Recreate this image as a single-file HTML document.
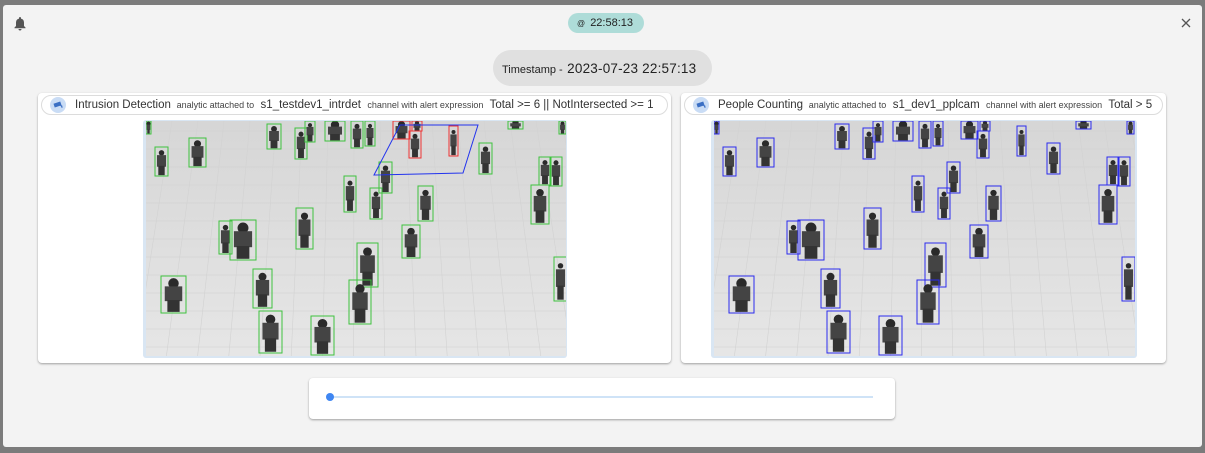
<!DOCTYPE html>
<html><head><meta charset="utf-8"><style>
html,body{margin:0;padding:0;width:1205px;height:453px;overflow:hidden;background:#7b7b7b;font-family:"Liberation Sans",sans-serif;}
.modal{position:absolute;left:3px;top:5px;width:1199px;height:442px;background:#f3f3f3;border-radius:3px;}
.abs{position:absolute;}
.card{position:absolute;background:#fff;border-radius:4px;box-shadow:0 1px 2px rgba(0,0,0,.35);}
.hdr{position:absolute;top:2px;left:3px;right:3px;height:18px;border:1px solid #dcdcdc;border-radius:10px;background:#fff;font-size:11.5px;color:#333;white-space:nowrap;line-height:18px;}
.hdr .ic{position:absolute;left:8px;top:1px;width:16px;height:16px;border-radius:50%;background:#c9dcf5;}
.hdr .ic svg{position:absolute;left:3px;top:4px}
.hdr .t{position:absolute;left:33px;top:0;}
.s{font-size:9px;color:#444;}
.m{font-size:11.5px;}
.img{position:absolute;top:27px;background:#d9e6f3;border-radius:3px;}
</style></head><body>
<div class="modal">
  <svg class="abs" style="left:10px;top:11px" width="14" height="15" viewBox="0 0 14 15"><path d="M7 1a1 1 0 0 1 1 1v.6A4 4 0 0 1 11 6.5V10l1.5 1.5v.7h-11v-.7L3 10V6.5A4 4 0 0 1 6 2.6V2a1 1 0 0 1 1-1z M5.5 13h3a1.5 1.5 0 0 1-3 0z" fill="#555"/></svg>
  <div class="abs" style="left:565px;top:8px;width:76px;height:20px;border-radius:10px;background:#aedcd8;font-size:11px;line-height:20px;color:#222"><span style="font-size:8px;margin-left:9px">@</span> <span style="margin-left:2px">22:58:13</span></div>
  <svg class="abs" style="left:1178px;top:13px" width="10" height="10"><path d="M1 1L9 9M9 1L1 9" stroke="#555" stroke-width="1.3"/></svg>
  <div class="abs" style="left:490px;top:45px;width:219px;height:36px;border-radius:18px;background:#e0e0e0;line-height:37px;color:#222;white-space:nowrap"><span style="font-size:11px;margin-left:9px">Timestamp -</span> <span style="font-size:13.5px;letter-spacing:.2px">2023-07-23 22:57:13</span></div>

  <div class="card" style="left:35px;top:88px;width:633px;height:270px">
    <div class="hdr"><div class="ic"><svg width="10" height="8"><path d="M1 3l6-2 1 3-6 2z M7 4l2 1v2" fill="#3a6fc4" stroke="#3a6fc4" stroke-width=".8"/></svg></div><div class="t"><span class="m">Intrusion Detection</span> <span class="s">&nbsp;analytic attached to</span>&nbsp; <span class="m">s1_testdev1_intrdet</span>&nbsp; <span class="s">channel with alert expression</span>&nbsp; <span class="m">Total &gt;= 6 || NotIntersected &gt;= 1</span></div></div>
    <div class="img" style="left:105px;width:424px;height:238px"><svg id="a" style="position:absolute;left:3px;top:1px" width="420" height="235"></svg></div>
  </div>
  <div class="card" style="left:678px;top:88px;width:485px;height:270px">
    <div class="hdr"><div class="ic"><svg width="10" height="8"><path d="M1 3l6-2 1 3-6 2z M7 4l2 1v2" fill="#3a6fc4" stroke="#3a6fc4" stroke-width=".8"/></svg></div><div class="t"><span class="m">People Counting</span> <span class="s">&nbsp;analytic attached to</span>&nbsp; <span class="m">s1_dev1_pplcam</span>&nbsp; <span class="s">channel with alert expression</span>&nbsp; <span class="m">Total &gt; 5</span></div></div>
    <div class="img" style="left:30px;width:426px;height:238px"><svg id="b" style="position:absolute;left:3px;top:1px" width="421" height="235"></svg></div>
  </div>

  <div class="card" style="left:306px;top:373px;width:586px;height:41px">
    <div class="abs" style="left:24px;top:18px;width:540px;height:2px;background:#cfe3f7"></div>
    <div class="abs" style="left:17px;top:15px;width:8px;height:8px;border-radius:50%;background:#3f86f2"></div>
  </div>
</div>
<script>
var B=[[9,26,13,29],[43,17,17,29],[121,3,14,25],[149,7,12,31],[159,0,10,21],[179,0,20,20],[205,0,12,27],[219,0,10,25],[333,22,13,31],[362,0,15,8],[393,36,12,28],[404,36,12,29],[385,64,18,39],[413,0,7,13],[233,41,13,31],[198,55,12,36],[224,67,12,31],[272,65,15,35],[150,87,17,41],[73,100,13,33],[84,99,26,40],[256,104,18,33],[211,122,21,44],[408,136,13,44],[15,155,25,37],[107,148,19,39],[203,159,22,44],[113,190,23,42],[165,195,23,39],[0,0,5,13]];
var R=[[247,0,17,18],[263,10,12,27],[266,0,10,10],[303,5,9,30]];
function draw(id,col,red){
 var s='<defs><linearGradient id="g'+id+'" x1="0" y1="0" x2="0" y2="1"><stop offset="0" stop-color="#d6d6d6"/><stop offset="1" stop-color="#e6e6e6"/></linearGradient></defs><rect width="100%" height="100%" fill="url(#g'+id+')"/>';
 for(var y=10;y<235;y+=18)s+='<line x1="0" y1="'+y+'" x2="421" y2="'+y+'" stroke="#d0d0d0" stroke-width=".6"/>';
 for(var x=0;x<421;x+=26)s+='<line x1="'+x+'" y1="0" x2="'+(x+(x-210)*0.2)+'" y2="235" stroke="#d2d2d2" stroke-width=".6"/>';
 function p(b,c){var cx=b[0]+b[2]/2,w=b[2]*.35;s+='<circle cx="'+cx+'" cy="'+(b[1]+b[3]*.2)+'" r="'+Math.max(2,w*.6)+'" fill="#2a2a2a"/><rect x="'+(cx-w)+'" y="'+(b[1]+b[3]*.28)+'" width="'+(2*w)+'" height="'+(b[3]*.4)+'" fill="#444"/><rect x="'+(cx-w*.7)+'" y="'+(b[1]+b[3]*.65)+'" width="'+(1.4*w)+'" height="'+(b[3]*.32)+'" fill="#333"/><rect x="'+b[0]+'" y="'+b[1]+'" width="'+b[2]+'" height="'+b[3]+'" fill="none" stroke="'+c+'" stroke-width="1"/>';}
 B.forEach(function(b){p(b,col)});
 R.forEach(function(b){p(b,red?'#e33':col)});
 if(red)s+='<polygon points="254,4 332,4 317,52 228,54" fill="none" stroke="#2233ee" stroke-width="1"/>';
 document.getElementById(id).innerHTML=s;
}
draw('a','#3ec23e',1);draw('b','#2b2bee',0);
</script>
</body></html>
